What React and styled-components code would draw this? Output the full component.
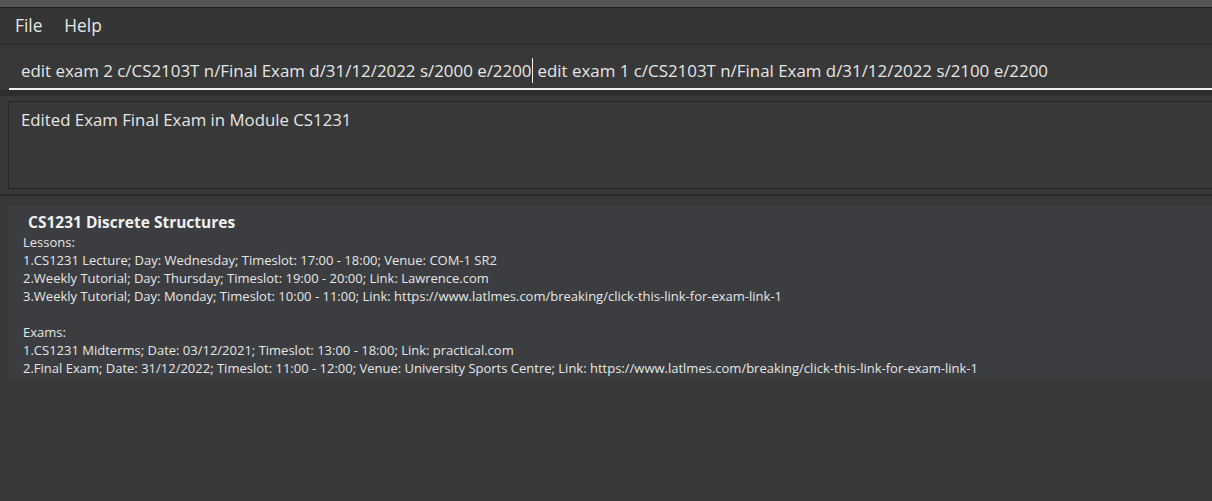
import React from "react";
import styled, { createGlobalStyle } from "styled-components";

const Global = createGlobalStyle`
  html, body { margin: 0; padding: 0; background: #383838; }
  body { font-family: "Open Sans", "Noto Sans", sans-serif; color: #e6e6e6; }
  #root { width: 1212px; height: 501px; overflow: hidden; }
`;

const Window = styled.div`
  display: flex;
  flex-direction: column;
  width: 1212px;
  height: 501px;
  background: #383838;
`;

const TitleStrip = styled.div`
  height: 7px;
  background: #555555;
  border-bottom: 1px solid #1f1f1f;
`;

const MenuBar = styled.div`
  display: flex;
  align-items: center;
  gap: 22px;
  height: 36px;
  padding: 0 15px;
  background: #353535;
  border-bottom: 1px solid #2a2a2a;
`;

const MenuItem = styled.span`
  font-size: 17.3px;
  color: #e8e8e8;
  margin-top: -1px;
`;

const CommandArea = styled.div`
  height: 45px;
  padding-left: 9px;
  background: #383838;
  display: flex;
  flex-direction: column;
`;

const CommandInput = styled.div`
  flex: 1;
  display: flex;
  align-items: center;
  padding: 7px 0 0 12px;
  border-bottom: 2px solid #f0f0f0;
  font-size: 16.9px;
  color: #e6e6e6;
  white-space: pre;
`;

const Caret = styled.span`
  display: inline-block;
  width: 1px;
  height: 25px;
  margin: 0 4px 0 1px;
  background: #eeeeee;
`;

const Band = styled.div`
  height: ${p => p.$h}px;
  background: ${p => p.$c};
`;

const ResultBox = styled.div`
  margin: 5px 0 0 8px;
  height: 88px;
  border: 1px solid #262626;
  border-right: none;
  padding: 6px 12px;
  font-size: 16.8px;
  color: #e6e6e6;
  box-sizing: border-box;
  background: #383838;
`;

const ListArea = styled.div`
  flex: 1;
  margin-top: 5px;
  border-top: 2px solid #2c2c2c;
  padding: 10px 0 0 8px;
  background: #383838;
`;

const Card = styled.div`
  background: #3c3d40;
  padding: 5px 0 4px 15px;
`;

const CardTitle = styled.div`
  font-weight: 700;
  font-size: 15.5px;
  color: #f0f0f0;
  padding-left: 5px;
  line-height: 22px;
`;

const CardLine = styled.div`
  font-size: 13px;
  line-height: 18px;
  min-height: 18px;
  color: #e6e6e6;
  white-space: pre;
`;

const lines = [
  "Lessons:",
  "1.CS1231 Lecture; Day: Wednesday; Timeslot: 17:00 - 18:00; Venue: COM-1 SR2",
  "2.Weekly Tutorial; Day: Thursday; Timeslot: 19:00 - 20:00; Link: Lawrence.com",
  "3.Weekly Tutorial; Day: Monday; Timeslot: 10:00 - 11:00; Link: https://www.latlmes.com/breaking/click-this-link-for-exam-link-1",
  "",
  "Exams:",
  "1.CS1231 Midterms; Date: 03/12/2021; Timeslot: 13:00 - 18:00; Link: practical.com",
  "2.Final Exam; Date: 31/12/2022; Timeslot: 11:00 - 12:00; Venue: University Sports Centre; Link: https://www.latlmes.com/breaking/click-this-link-for-exam-link-1",
];

export default function App() {
  return (
    <>
      <Global />
      <Window>
        <TitleStrip />
        <MenuBar>
          <MenuItem>File</MenuItem>
          <MenuItem>Help</MenuItem>
        </MenuBar>
        <CommandArea>
          <CommandInput>
            edit exam 2 c/CS2103T n/Final Exam d/31/12/2022 s/2000 e/2200<Caret />edit exam 1 c/CS2103T n/Final Exam d/31/12/2022 s/2100 e/2200
          </CommandInput>
        </CommandArea>
        <Band $h={6} $c="#2e2e2e" />
        <ResultBox>Edited Exam Final Exam in Module CS1231</ResultBox>
        <ListArea>
          <Card>
            <CardTitle>CS1231 Discrete Structures</CardTitle>
            {lines.map((l, i) => (
              <CardLine key={i}>{l}</CardLine>
            ))}
          </Card>
        </ListArea>
      </Window>
    </>
  );
}
